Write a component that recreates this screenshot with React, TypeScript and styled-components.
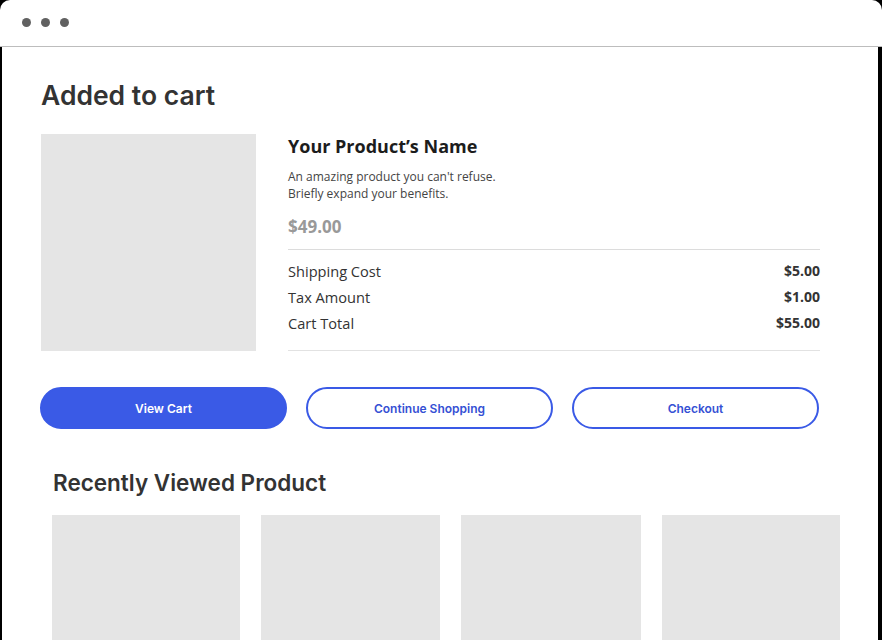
import React from 'react'
import styled, { createGlobalStyle } from 'styled-components'

const Global = createGlobalStyle`
  html, body {
    margin: 0;
    padding: 0;
    background: #000;
  }
  body {
    width: 882px;
    height: 640px;
    overflow: hidden;
  }
  * { box-sizing: border-box; }
`

const Window = styled.div`
  width: 882px;
  height: 640px;
  display: flex;
  flex-direction: column;
`

const TitleBar = styled.div`
  height: 47px;
  flex-shrink: 0;
  background: #fff;
  border-radius: 10px 10px 0 0;
  border-bottom: 1px solid #bdbdbd;
  display: flex;
  align-items: center;
  gap: 10px;
  padding-left: 22px;
  padding-bottom: 1px;
`

const Dot = styled.span`
  width: 9px;
  height: 9px;
  border-radius: 50%;
  background: #616161;
`

const Page = styled.div`
  flex: 1;
  background: #fff;
  margin: 0 4px 0 2px;
  padding: 30px 0 0 39px;
  overflow: hidden;
`

const Heading = styled.h1`
  margin: 0;
  font-family: Inter, sans-serif;
  font-weight: 600;
  font-size: 26.5px;
  line-height: 36px;
  color: #333;
`

const Summary = styled.div`
  display: flex;
  gap: 32px;
  margin-top: 21px;
`

const Thumb = styled.div<{ $w: number; $h: number }>`
  width: ${({ $w }) => $w}px;
  height: ${({ $h }) => $h}px;
  background: #e5e5e5;
  flex-shrink: 0;
`

const Details = styled.div`
  width: 532px;
  font-family: 'Open Sans', sans-serif;
`

const ProductName = styled.h2`
  margin: 0;
  font-size: 18px;
  font-weight: 700;
  color: #1c1c1c;
  line-height: 24px;
`

const Desc = styled.p`
  margin: 10px 0 0;
  font-size: 12px;
  line-height: 17px;
  color: #444;
`

const Price = styled.div`
  margin-top: 13px;
  font-size: 17px;
  font-weight: 700;
  color: #999;
  line-height: 24px;
  padding-bottom: 10px;
  border-bottom: 1px solid #dcdcdc;
`

const Rows = styled.div`
  padding: 11px 0 17px;
  border-bottom: 1px solid #e2e2e2;
  display: flex;
  flex-direction: column;
  gap: 6px;
`

const Row = styled.div`
  display: flex;
  justify-content: space-between;
  font-size: 14.6px;
  line-height: 20px;
  color: #333;

  b {
    font-weight: 700;
    font-size: 14px;
  }
`

const Actions = styled.div`
  display: flex;
  gap: 19px;
  margin-top: 36px;
  margin-left: -1px;
`

const Button = styled.button<{ $primary?: boolean }>`
  width: 247px;
  height: 42px;
  padding: 0;
  border-radius: 21px;
  font-family: Inter, sans-serif;
  font-size: 12px;
  font-weight: 600;
  cursor: pointer;
  border: 2px solid #3a5ae6;
  background: ${({ $primary }) => ($primary ? '#3a5ae6' : '#fff')};
  color: ${({ $primary }) => ($primary ? '#fff' : '#3550d4')};
`

const SubHeading = styled.h2`
  margin: 40px 0 0 12px;
  font-family: Inter, sans-serif;
  font-weight: 600;
  font-size: 22.5px;
  line-height: 28px;
  color: #333;
`

const Recent = styled.div`
  display: flex;
  gap: 21px;
  margin: 18px 0 0 11px;
`

const recent = [188, 179, 180, 178]

export default function App() {
  return (
    <>
      <Global />
      <Window>
        <TitleBar>
          <Dot />
          <Dot />
          <Dot />
        </TitleBar>
        <Page>
          <Heading>Added to cart</Heading>
          <Summary>
            <Thumb $w={215} $h={217} />
            <Details>
              <ProductName>Your Product’s Name</ProductName>
              <Desc>
                An amazing product you can't refuse.
                <br />
                Briefly expand your benefits.
              </Desc>
              <Price>$49.00</Price>
              <Rows>
                <Row>
                  <span>Shipping Cost</span>
                  <b>$5.00</b>
                </Row>
                <Row>
                  <span>Tax Amount</span>
                  <b>$1.00</b>
                </Row>
                <Row>
                  <span>Cart Total</span>
                  <b>$55.00</b>
                </Row>
              </Rows>
            </Details>
          </Summary>
          <Actions>
            <Button $primary>View Cart</Button>
            <Button>Continue Shopping</Button>
            <Button>Checkout</Button>
          </Actions>
          <SubHeading>Recently Viewed Product</SubHeading>
          <Recent>
            {recent.map((w, i) => (
              <Thumb key={i} $w={w} $h={140} />
            ))}
          </Recent>
        </Page>
      </Window>
    </>
  )
}
